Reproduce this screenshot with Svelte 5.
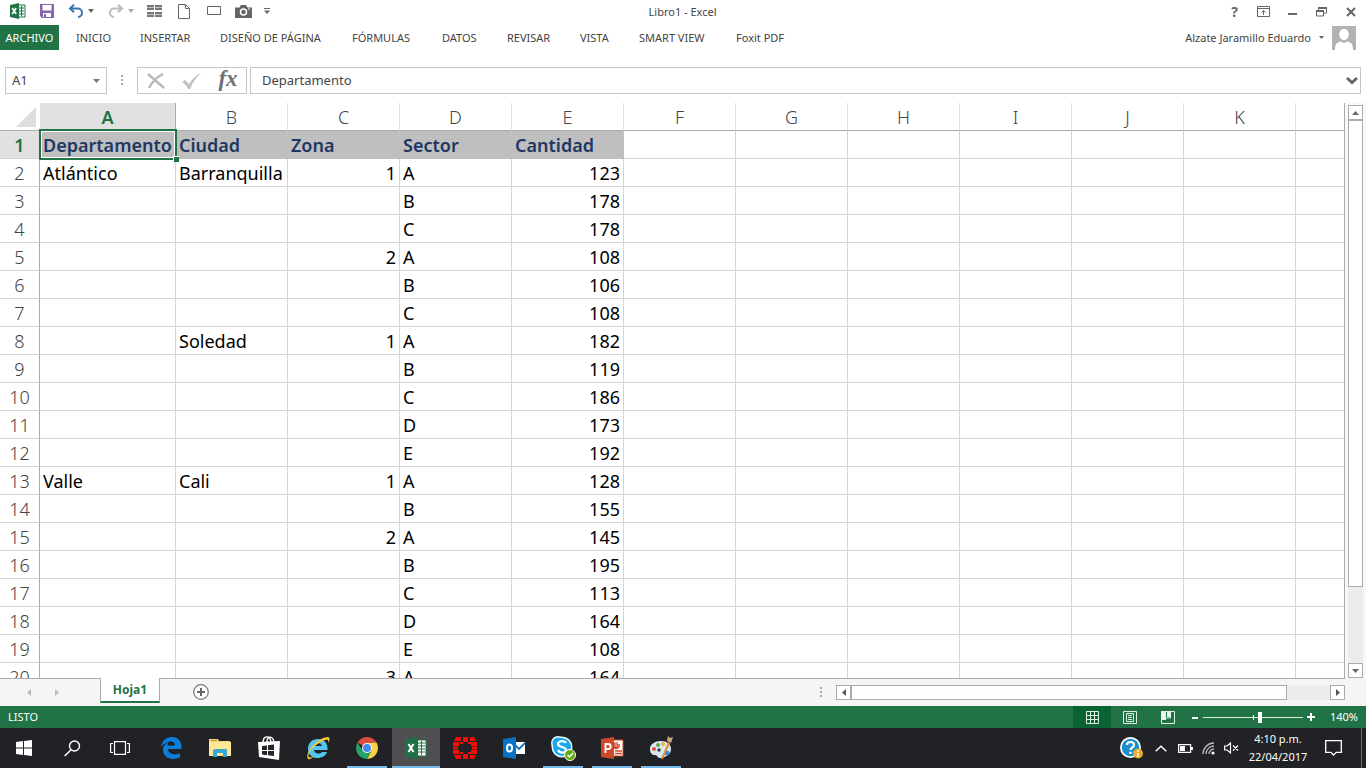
<script>
  const tabs = ['INICIO', 'INSERTAR', 'DISEÑO DE PÁGINA', 'FÓRMULAS', 'DATOS', 'REVISAR', 'VISTA', 'SMART VIEW', 'Foxit PDF'];
  const columns = ['A', 'B', 'C', 'D', 'E', 'F', 'G', 'H', 'I', 'J', 'K', ''];
  const records = [
    ['Departamento', 'Ciudad', 'Zona', 'Sector', 'Cantidad'],
    ['Atlántico', 'Barranquilla', 1, 'A', 123],
    ['', '', '', 'B', 178],
    ['', '', '', 'C', 178],
    ['', '', 2, 'A', 108],
    ['', '', '', 'B', 106],
    ['', '', '', 'C', 108],
    ['', 'Soledad', 1, 'A', 182],
    ['', '', '', 'B', 119],
    ['', '', '', 'C', 186],
    ['', '', '', 'D', 173],
    ['', '', '', 'E', 192],
    ['Valle', 'Cali', 1, 'A', 128],
    ['', '', '', 'B', 155],
    ['', '', 2, 'A', 145],
    ['', '', '', 'B', 195],
    ['', '', '', 'C', 113],
    ['', '', '', 'D', 164],
    ['', '', '', 'E', 108],
    ['', '', 3, 'A', 164]
  ];
  let cellRef = $state('A1');
  let formula = $state('Departamento');
  let zoom = $state(57);
</script>

<div class="window">
  <header class="titlebar">
    <div class="quick">
      <button aria-label="Excel">
        <svg width="18" height="16" viewBox="0 0 18 16"><path d="M9 2h7v12H9z" fill="#fff" stroke="#217346"/><path d="M10 5h5M10 8h5M10 11h5M12.500 3v10" stroke="#217346"/><path d="M1 2 10 0v16L1 14z" fill="#217346"/><path d="m3.200 5 4 6M7.200 5l-4 6" stroke="#fff" stroke-width="1.600"/></svg>
      </button>
      <button aria-label="Guardar">
        <svg width="16" height="16" viewBox="0 0 16 16"><path d="M1 1h14v14H3l-2-2z" fill="#8a63ae"/><path d="M3.500 2h9v5.500h-9zM4 10h8v4H4z" fill="#fff"/><path d="M5 11h2v3H5z" fill="#8a63ae"/></svg>
      </button>
      <button aria-label="Deshacer">
        <svg width="16" height="14" viewBox="0 0 16 14"><path d="M2 4.500h7.500a4.200 4.200 0 0 1 .5 8.500M6 .8 2 4.500l4 3.800" fill="none" stroke="#3b73b0" stroke-width="2"/></svg>
      </button>
      <button class="more" aria-label="Opciones de deshacer"><svg width="6" height="4" viewBox="0 0 6 4"><path d="M0 0h6L3 4z" fill="#666"/></svg></button>
      <button aria-label="Rehacer">
        <svg width="16" height="14" viewBox="0 0 16 14"><path d="M14 4.500H6.500A4.200 4.200 0 0 0 6 13M10 .8l4 3.700-4 3.800" fill="none" stroke="#bbb" stroke-width="2"/></svg>
      </button>
      <button class="more" aria-label="Opciones de rehacer"><svg width="6" height="4" viewBox="0 0 6 4"><path d="M0 0h6L3 4z" fill="#aaa"/></svg></button>
      <button aria-label="Inmovilizar">
        <svg width="16" height="12" viewBox="0 0 16 12"><path d="M0 0h7v5H0zM8 0h7v5H8zM0 7h7v5H0zM8 7h7v5H8z" fill="#777"/><path d="M0 2.500h7M0 9.500h7M8 2.500h7M8 9.500h7" stroke="#c4c4c4"/></svg>
      </button>
      <button aria-label="Nuevo">
        <svg width="12" height="15" viewBox="0 0 12 15"><path d="M.5.500h7l4 4v10H.5zM7.500.500v4h4" fill="#fff" stroke="#666"/></svg>
      </button>
      <button aria-label="Rectángulo">
        <svg width="15" height="10" viewBox="0 0 15 10"><path d="M.5.500h13v8H.5z" fill="#fff" stroke="#666"/><path d="M1 8.500h13M13.500 1v8" stroke="#666"/></svg>
      </button>
      <button aria-label="Cámara">
        <svg width="17" height="13" viewBox="0 0 17 13"><path d="M0 2.500h4.500L6 0h5l1.500 2.500H17V13H0z" fill="#666"/><circle cx="8.500" cy="7" r="3" fill="none" stroke="#fff" stroke-width="1.500"/><path d="M13 4h2" stroke="#fff"/></svg>
      </button>
      <button aria-label="Personalizar"><svg width="6" height="6" viewBox="0 0 6 6"><path d="M0 .5h6" stroke="#666"/><path d="M0 2.500h6L3 6z" fill="#666"/></svg></button>
    </div>
    <h1>Libro1 - Excel</h1>
    <div class="controls">
      <button class="help" aria-label="Ayuda">?</button>
      <button aria-label="Opciones de la cinta">
        <svg width="13" height="11" viewBox="0 0 13 11"><path d="M.5.500h12v10H.5zM1 2.500h11M6.500 9V4.500M4.500 6.500l2-2 2 2" fill="none" stroke="#666"/></svg>
      </button>
      <button aria-label="Minimizar"><svg width="10" height="10" viewBox="0 0 10 10"><path d="M0 7h9" stroke="#666" stroke-width="2"/></svg></button>
      <button aria-label="Restaurar"><svg width="11" height="10" viewBox="0 0 11 10"><path d="M2.500 3V1h8v5H8M.5 4h7v5H.5z" fill="none" stroke="#666"/><path d="M2 1h9M0 4h8" stroke="#666" stroke-width="2"/></svg></button>
      <button aria-label="Cerrar"><svg width="10" height="10" viewBox="0 0 10 10"><path d="m1 1 8 8M9 1 1 9" stroke="#666" stroke-width="2"/></svg></button>
    </div>
  </header>

  <nav class="ribbon">
    <button class="file">ARCHIVO</button>
    {#each tabs as tab}<button>{tab}</button>{/each}
    <button class="user">
      Alzate Jaramillo Eduardo
      <svg width="5" height="3" viewBox="0 0 5 3"><path d="M0 0h5L2.500 3z" fill="#666"/></svg>
      <svg width="24" height="24" viewBox="0 0 24 24"><path d="M0 0h24v24H0z" fill="#b2b2b2"/><ellipse cx="12" cy="8.500" rx="4.800" ry="5.700" fill="#fff"/><path d="M3 24c0-5 1-7.500 6-8.500l3 1.500 3-1.500c5 1 6 3.500 6 8.500z" fill="#fff"/></svg>
    </button>
  </nav>

  <div class="formulabar">
    <div class="namebox">
      <input aria-label="Cuadro de nombres" bind:value={cellRef} />
      <button aria-label="Nombres"><svg width="7" height="4" viewBox="0 0 7 4"><path d="M0 0h7L3.500 4z" fill="#777"/></svg></button>
    </div>
    <svg class="grip" width="2" height="11" viewBox="0 0 2 11"><path d="M0 0h2v2H0zM0 4h2v2H0zM0 8h2v2H0z" fill="#aaa"/></svg>
    <div class="actions">
      <button aria-label="Cancelar"><svg width="18" height="16" viewBox="0 0 18 16"><path d="m1 1 16 14" stroke="#b9b9b9" stroke-width="2.400"/><path d="M16 1C10 4 5 9 2 15" fill="none" stroke="#b9b9b9" stroke-width="2.400"/></svg></button>
      <button aria-label="Introducir"><svg width="20" height="16" viewBox="0 0 20 16"><path d="m0 9 3-2 4 4C10 6 14 2 19 0c-5 4-8 9-11 16H6C5 13 3 11 0 9z" fill="#c0c0c0"/></svg></button>
      <button class="fx" aria-label="Insertar función">fx</button>
    </div>
    <div class="formula">
      <input aria-label="Barra de fórmulas" bind:value={formula} />
      <button aria-label="Expandir"><svg width="12" height="9" viewBox="0 0 12 9"><path d="m1 2 5 4.500L11 2" fill="none" stroke="#666" stroke-width="3"/></svg></button>
    </div>
  </div>

  <main class="sheet">
    <div class="grid">
      <table>
        <colgroup>
          <col class="c-num" /><col class="c-a" />
          {#each columns.slice(1, 11) as _}<col class="c-std" />{/each}
          <col />
        </colgroup>
        <thead>
          <tr>
            <th class="corner" aria-label="Seleccionar todo"><svg width="20" height="20" viewBox="0 0 20 20"><path d="M20 0v20H0z" fill="#dedede"/></svg></th>
            {#each columns as column, i}<th scope="col" class:active={i === 0}>{column}</th>{/each}
          </tr>
        </thead>
        <tbody>
          {#each records as record, r}
            <tr>
              <th scope="row" class:active={r === 0}>{r + 1}</th>
              {#each columns as _, c}
                <td class:filled={r === 0 && c < 5} class:number={typeof record[c] === 'number'}>
                  {record[c] ?? ''}
                  {#if r === 0 && c === 0}<span class="selection"><span class="handle"></span></span>{/if}
                </td>
              {/each}
            </tr>
          {/each}
        </tbody>
      </table>
    </div>
    <div class="vscroll">
      <button aria-label="Desplazar arriba"><svg width="7" height="4" viewBox="0 0 7 4"><path d="M0 4h7L3.500 0z" fill="#666"/></svg></button>
      <div class="track"><div class="thumb"></div></div>
      <button aria-label="Desplazar abajo"><svg width="7" height="4" viewBox="0 0 7 4"><path d="M0 0h7L3.500 4z" fill="#666"/></svg></button>
    </div>
  </main>

  <div class="sheetbar">
    <div class="sheets">
      <button aria-label="Hoja anterior"><svg width="4" height="7" viewBox="0 0 4 7"><path d="M4 0v7L0 3.500z" fill="#bbb"/></svg></button>
      <button class="next" aria-label="Hoja siguiente"><svg width="4" height="7" viewBox="0 0 4 7"><path d="M0 0v7l4-3.500z" fill="#bbb"/></svg></button>
      <button class="tab">Hoja1</button>
      <button aria-label="Hoja nueva"><svg width="16" height="16" viewBox="0 0 16 16"><circle cx="8" cy="8" r="7.300" fill="#fff" stroke="#777" stroke-width="1.200"/><path d="M4 8h8M8 4v8" stroke="#666" stroke-width="2"/></svg></button>
    </div>
    <svg class="grip" width="2" height="11" viewBox="0 0 2 11"><path d="M0 0h2v2H0zM0 4h2v2H0zM0 8h2v2H0z" fill="#aaa"/></svg>
    <div class="hscroll">
      <button aria-label="Desplazar a la izquierda"><svg width="4" height="7" viewBox="0 0 4 7"><path d="M4 0v7L0 3.500z" fill="#555"/></svg></button>
      <div class="track"><div class="thumb"></div></div>
      <button aria-label="Desplazar a la derecha"><svg width="4" height="7" viewBox="0 0 4 7"><path d="M0 0v7l4-3.500z" fill="#555"/></svg></button>
    </div>
  </div>

  <footer class="status">
    <span class="ready">LISTO</span>
    <button class="on" aria-label="Normal"><svg width="13" height="13" viewBox="0 0 13 13"><path d="M.5.500h12v12H.5zM4.500 0v13M8.500 0v13M0 4.500h13M0 8.500h13" fill="none" stroke="#d9efdf"/></svg></button>
    <button aria-label="Diseño de página"><svg width="14" height="13" viewBox="0 0 14 13"><path d="M.5.500h13v12H.5zM3.500 2.500h7v8h-7zM5 4.500h4M5 6.500h4M5 8.500h4" fill="none" stroke="#d9efdf"/></svg></button>
    <button aria-label="Salto de página"><svg width="14" height="13" viewBox="0 0 14 13"><path d="M.5.500h13v12H.5z" fill="none" stroke="#d9efdf"/><path d="M0 0h5v9H0zM6 0h3v6H6z" fill="#e6f5ea"/><path d="M9.500 0v7H5" stroke="#d9efdf" fill="none"/></svg></button>
    <button class="step" aria-label="Alejar"><svg width="7" height="9" viewBox="0 0 7 9"><path d="M0 5h6" stroke="#fff" stroke-width="2"/></svg></button>
    <input class="zoom" type="range" min="0" max="100" aria-label="Zoom" bind:value={zoom} />
    <button class="step" aria-label="Acercar"><svg width="8" height="8" viewBox="0 0 8 8"><path d="M0 4h8M4 0v8" stroke="#fff" stroke-width="2"/></svg></button>
    <span class="percent">140%</span>
  </footer>

  <div class="taskbar">
    <div class="system">
      <button aria-label="Inicio"><svg width="16" height="16" viewBox="0 0 16 16"><path d="m0 2 7-1v6.500H0zM8 1l8-1v7.500H8zM0 8.500h7V15l-7-1zM8 8.500h8V16l-8-1z" fill="#fff"/></svg></button>
      <button aria-label="Buscar"><svg width="17" height="17" viewBox="0 0 17 17"><circle cx="10.500" cy="6" r="5" fill="none" stroke="#fff" stroke-width="1.400"/><path d="M7 9.700.700 16" stroke="#fff" stroke-width="1.600"/></svg></button>
      <button aria-label="Vista de tareas"><svg width="20" height="14" viewBox="0 0 20 14"><path d="M4.500.600h11v12.800h-11zM3 2.500H.6v9H3M17 2.500h2.400v9H17" fill="none" stroke="#fff" stroke-width="1.200"/></svg></button>
    </div>
    <div class="apps">
      <button aria-label="Edge"><svg width="21" height="22" viewBox="0 0 21 22"><path d="M0 10C1 4 5 0 11 0c7 0 10 5 9.500 12H7c0 5 7 7 12 4v4.500C11 24 2 21 2 13c0-4 3-7 6-8-1 1-1.300 2-1.500 3.500h7.500c0-6-9-5-14 1.500z" fill="#0b7ddb"/></svg></button>
      <button aria-label="Explorador"><svg width="22" height="18" viewBox="0 0 22 18"><path d="M0 0h9l1 2h11v15H0z" fill="#f5d478"/><path d="M0 3h22v14H0z" fill="#ffe798"/><path d="M2 1h6v1H2z" fill="#c89b2c"/><path d="M4 18v-7l2-1h11l1 1v7h-4v-4H8v4z" fill="#35a9d6"/></svg></button>
      <button aria-label="Tienda"><svg width="22" height="24" viewBox="0 0 22 24"><path d="M5 7c0-8 7-8 8-1M9 6c0-7 6-6 7 0" fill="none" stroke="#fff" stroke-width="1.400"/><path d="m0 6 22-1-1 19-20-3z" fill="#fff"/><path d="m4 10 5-.6V14H4zM10 9.200l6-.7V14h-6zM4 15h5v4.200l-5-.6zM10 15h6v5l-6-.7z" fill="#24272a"/></svg></button>
      <button aria-label="Internet Explorer"><svg width="24" height="24" viewBox="0 0 24 24"><path d="M2 13C2 7 6 3 12 3s10 4 9.500 11H8c.5 4 6 4.500 8 2h5c-2 8-19 9-19-3z" fill="#53c5f1"/><path d="M8 10c1-4 7-4 8 0z" fill="#202426"/><path d="M2 23C-2 17 12 1 22 1c3 1 1 5 0 6 1-3 0-4-3-3C10 7 0 18 3 21c1 1 3 0 5-1-2 2-4 4-6 3z" fill="#f3ca3b"/></svg></button>
      <button class="running" aria-label="Chrome"><svg width="22" height="22" viewBox="0 0 22 22"><path d="M11 11 1.500 5.500A11 11 0 0 1 20.500 5.500L11 6z" fill="#dd4b3e"/><path d="M20.500 5.500A11 11 0 0 1 11 22l4.500-8.500L11 6z" fill="#fcd044"/><path d="M1.500 5.500A11 11 0 0 0 11 22l4.500-8.500H6.600z" fill="#24a366"/><circle cx="11" cy="11" r="5" fill="#fff"/><circle cx="11" cy="11" r="4" fill="#4587ef"/></svg></button>
      <button class="running current" aria-label="Excel"><svg width="22" height="22" viewBox="0 0 22 22"><path d="M12 3h9v16h-9z" fill="#fff" stroke="#217346"/><path d="M13 6h7M13 9h7M13 12h7M13 15h7M16.500 4v14" stroke="#217346"/><path d="m0 2 13-2v22L0 20z" fill="#1e7145"/><path d="m3.500 7 5 8M8.500 7l-5 8" stroke="#fff" stroke-width="2"/></svg></button>
      <button aria-label="Fortinet"><svg width="24" height="22" viewBox="0 0 24 22"><path d="M10 0h5v5h-5zM10 17h5v5h-5zM0 5h6v4H0zM18 5h6v4h-6zM0 13h6v4H0zM18 13h6v4h-6zM0 9.500h5v3H0zM19 9.500h5v3h-5zM3 0h5v4H1zM17 0h4l2 4h-6zM1 18h7v4H3zM17 18h6l-2 4h-4zM7 5h3v2H7zM15 5h3v2h-3zM7 15h3v2H7zM15 15h3v2h-3z" fill="#f20d0d"/></svg></button>
      <button aria-label="Outlook"><svg width="22" height="22" viewBox="0 0 22 22"><path d="M12 5h10v12H12z" fill="#fff"/><path d="m12 8 4 4 6-6" fill="none" stroke="#0f6fbd" stroke-width="1.800"/><path d="m0 2 13-2v22L0 20z" fill="#0873c7"/><ellipse cx="6.500" cy="11" rx="2.500" ry="3.500" fill="none" stroke="#fff" stroke-width="2"/></svg></button>
      <button class="running" aria-label="Skype"><svg width="25" height="25" viewBox="0 0 25 25"><circle cx="7" cy="7" r="7" fill="#eaf8fe"/><circle cx="11" cy="11" r="10.500" fill="#eaf8fe"/><circle cx="7" cy="7" r="5.500" fill="#18a7e8"/><circle cx="11" cy="11" r="9" fill="#18a7e8"/><path d="M15 7C13 4 7 5 7 8c0 4 8 2 8 6 0 3-6 4-8 0" fill="none" stroke="#fff" stroke-width="2.200"/><circle cx="19" cy="19" r="5.500" fill="#62a80f" stroke="#fff"/><path d="m16.500 19 2 2 3.500-4" fill="none" stroke="#fff" stroke-width="1.500"/></svg></button>
      <button class="running" aria-label="PowerPoint"><svg width="23" height="22" viewBox="0 0 23 22"><path d="M12 3h10v16H12z" fill="#fff" stroke="#cf4525"/><path d="M14 6a3 3 0 1 0 4 4h-4zM16 5v3h3M14 14h7M14 16.500h7" fill="none" stroke="#cf4525" stroke-width="1.300"/><path d="m0 2 13-2v22L0 20z" fill="#d04727"/><path d="M4.500 16V7h2.700a2.500 2.500 0 0 1 0 5H5" fill="none" stroke="#fff" stroke-width="1.900"/></svg></button>
      <button class="running" aria-label="Paint"><svg width="24" height="24" viewBox="0 0 24 24"><path d="M1 13C1 8 6 5 12 5s10 3 10 8-5 8-10 9c-4 .5-3-3-6-3s-5-2-5-6z" fill="#d9e8f3"/><circle cx="5" cy="13" r="2" fill="#e04f3e"/><circle cx="9" cy="9" r="2" fill="#62ad43"/><circle cx="14" cy="8" r="2" fill="#e9b735"/><circle cx="18" cy="17" r="2.500" fill="#3b87cf"/><circle cx="10" cy="14" r="1.800" fill="#384048"/><path d="m12 23 7-17 2 1-7 16z" fill="#df8c36"/><path d="m18 5 1-5 2 2 3-1-2 6z" fill="#c9a87f"/></svg></button>
    </div>
    <div class="tray">
      <button aria-label="Asistencia"><svg width="23" height="22" viewBox="0 0 23 22"><circle cx="10.500" cy="10.500" r="10.500" fill="#fff"/><circle cx="10.500" cy="10.500" r="8.700" fill="#198ecb"/><path d="M7 8c0-4 7-4 7 0 0 2.500-3.500 2.500-3.500 5" fill="none" stroke="#fff" stroke-width="2.200"/><circle cx="10.500" cy="15.700" r="1.300" fill="#fff"/><circle cx="18" cy="16.500" r="5" fill="#efaa26"/><path d="M18 13v2M18 16v4" stroke="#fff" stroke-width="1.500"/></svg></button>
      <button aria-label="Iconos ocultos"><svg width="12" height="7" viewBox="0 0 12 7"><path d="m.7 6.300 5.300-5 5.300 5" fill="none" stroke="#fff" stroke-width="1.500"/></svg></button>
      <button aria-label="Batería"><svg width="15" height="9" viewBox="0 0 15 9"><path d="M.6.600h12v7.800H.6z" fill="none" stroke="#fff" stroke-width="1.200"/><path d="M2 2h5v5H2zM13 3h2v3h-2z" fill="#fff"/></svg></button>
      <button aria-label="Wi-Fi"><svg width="13" height="13" viewBox="0 0 13 13"><path d="M1 12A11 11 0 0 1 12 1M4 12a8 8 0 0 1 8-8M7 12a5 5 0 0 1 5-5" fill="none" stroke="#bbb" stroke-width="1.300"/><circle cx="11" cy="11" r="1.600" fill="#fff"/></svg></button>
      <button aria-label="Volumen"><svg width="15" height="12" viewBox="0 0 15 12"><path d="M.6 4h2.500L6.500.900v10L3.100 8H.6zM9 3.500l5 5M14 3.500l-5 5" fill="none" stroke="#fff" stroke-width="1.200"/></svg></button>
      <button class="clock"><span>4:10 p.m.</span><span>22/04/2017</span></button>
      <button aria-label="Notificaciones"><svg width="17" height="16" viewBox="0 0 17 16"><path d="M.7.700h15.600v11.600h-5L8.500 15 6 12.300H.7z" fill="none" stroke="#fff" stroke-width="1.300"/></svg></button>
      <span class="peek"></span>
    </div>
  </div>
</div>

<style>
  :global(body) { margin: 0; }
  .window { display: flex; flex-direction: column; height: 100vh; overflow: hidden; background: #fff; color: #444; font: 11px/16px "Noto Sans", sans-serif; }
  .window * { box-sizing: border-box; }
  svg { display: block; flex: none; }
  button { display: flex; align-items: center; justify-content: center; padding: 0; border: 0; background: none; color: inherit; font: inherit; white-space: nowrap; }
  input { min-width: 0; padding: 0; border: 0; outline: 0; background: none; color: inherit; font: inherit; }

  .titlebar { display: grid; grid-template-columns: 1fr auto 1fr; height: 25px; padding-right: 1px; }
  .quick { display: grid; grid-template-columns: 20px 38px 20px 20px 20px 20px 18px 40px 20px 38px 10px; padding-left: 8px; height: 22px; }
  .quick .more { justify-content: start; padding-left: 2px; }
  h1 { margin: 0; font-size: 11px; font-weight: 400; line-height: 24px; }
  .controls { display: grid; grid-template-columns: repeat(5, 29px); justify-content: end; height: 23px; }
  .help { font-size: 14px; font-weight: 700; color: #666; }

  .ribbon { display: grid; grid-template-columns: 76px 64px 80px 132px 90px 65px 73px 59px 97px 60px 1fr; height: 25px; }
  .ribbon button { justify-content: start; }
  .ribbon .file { justify-content: center; width: 59px; background: #217346; color: #fff; }
  .ribbon .user { justify-content: end; gap: 8px; padding-right: 10px; }

  .formulabar { display: flex; height: 27px; margin: 17px 5px 9px; font-size: 13px; }
  .namebox, .actions, .formula { display: flex; align-items: center; border: 1px solid #c6c6c6; }
  .namebox { width: 102px; padding: 0 6px; }
  .namebox input { flex: 1; }
  .formulabar input { height: 23px; padding-bottom: 2px; }
  .grip { align-self: center; margin: 0 14px; }
  .actions { width: 110px; }
  .actions button { flex: 1; }
  .actions .fx { padding-bottom: 3px; font: italic 700 23px/22px "Liberation Serif", serif; color: #707070; }
  .formula { flex: 1; margin-left: 3px; padding: 0 2px 0 11px; }
  .formula input { flex: 1; }

  .sheet { display: flex; flex: 1; min-height: 0; }
  .grid { flex: 1; min-width: 0; overflow: hidden; border-right: 1px solid #ababab; }
  table { width: 100%; table-layout: fixed; border-collapse: separate; border-spacing: 0; }
  .c-num { width: 40px; }
  .c-a { width: 136px; }
  .c-std { width: 112px; }
  th, td { height: 28px; padding: 0 3px; white-space: nowrap; text-align: left; line-height: 24px; }
  th { font-size: 18px; font-weight: 300; text-align: center; }
  thead th { border-right: 1px solid #e1e1e1; border-bottom: 1px solid #ababab; }
  .corner { padding: 0 3px 0 16px; border-right-color: #fff; }
  tbody th { border-right: 1px solid #ababab; border-bottom: 1px solid #d4d4d4; }
  th.active { background: #e1e1e1; color: #217346; font-weight: 600; }
  thead th.active { border-right-color: #ababab; }
  td { position: relative; border-right: 1px solid #d4d4d4; border-bottom: 1px solid #d4d4d4; color: #000; font-size: 18px; }
  tr > :last-child { border-right: 0; }
  td.number { text-align: right; }
  td.filled { background: #bfbfbf; border-color: #bfbfbf; color: #203764; font-weight: 600; }
  .selection { position: absolute; z-index: 1; inset: -2px -2px -2px -1px; border: 2px solid #217346; box-shadow: inset 0 0 0 1px #fff; }
  .handle { position: absolute; right: -4px; bottom: -4px; width: 6px; height: 6px; border: solid #fff; border-width: 1px 0 0 1px; background: #217346; }

  .vscroll { display: flex; flex-direction: column; width: 21px; padding: 2px 3px 0; background: #f8f8f8; }
  .vscroll button, .hscroll button { flex: none; width: 15px; height: 15px; border: 1px solid #ababab; background: #fff; }
  .track { flex: 1; background: #ececec; }
  .thumb { border: 1px solid #ababab; background: #fff; }
  .vscroll .thumb { height: 86%; }

  .sheetbar { display: flex; height: 28px; padding-right: 21px; background: linear-gradient(#ababab, #ababab) no-repeat 0 0 / calc(100% - 21px) 1px #f5f5f5; }
  .sheets { display: grid; grid-template-columns: 28px 57px 60px 82px; flex: 1; height: 28px; padding-left: 15px; }
  .sheets .tab { height: 25px; border: solid #ababab; border-width: 0 1px; border-bottom: 2px solid #217346; background: #fff; color: #217346; font-size: 12px; font-weight: 700; }
  .sheets .next { justify-content: start; padding-left: 12px; }
  .hscroll { display: flex; flex: none; width: 40%; max-width: 509px; margin-top: 7px; height: 15px; }
  .hscroll .thumb { width: 91%; height: 15px; }

  .status { display: flex; align-items: center; height: 22px; padding: 0 8px; background: #217346; color: #fff; }
  .status span { padding-bottom: 1px; }
  .ready { flex: 1; }
  .status button { width: 38px; height: 22px; }
  .status .on { background: #0a6332; }
  .status .step { width: 16px; }
  .zoom { appearance: none; width: 100px; height: 12px; margin: 0; background: linear-gradient(#fff, #fff) no-repeat 50% 50% / 1px 5px, linear-gradient(#d9efdf, #d9efdf) no-repeat 0 50% / 100% 1px; }
  .zoom::-webkit-slider-thumb { appearance: none; width: 4px; height: 11px; background: #fff; }
  .percent { width: 39px; text-align: right; }

  .taskbar { display: flex; height: 40px; background: #202225; color: #fff; }
  .system { display: grid; grid-template-columns: repeat(3, 48px); }
  .apps { display: grid; grid-template-columns: repeat(11, 48px); gap: 1px; flex: 1; padding-left: 3px; }
  .apps button { border-top: 2px solid transparent; border-bottom: 2px solid transparent; }
  .apps .running { background: linear-gradient(#76b9ed, #76b9ed) no-repeat 50% 100% / 40px 2px border-box; }
  .apps .current { background: linear-gradient(#76b9ed, #76b9ed) no-repeat 50% 100% / 100% 2px border-box #4d4f51; }
  .tray { display: grid; grid-template-columns: 34px 25px 24px 22px 24px 70px 40px 13px; }
  .clock { flex-direction: column; line-height: 18px; }
  .peek { border-left: 1px solid #66686a; margin-left: 8px; }
</style>
